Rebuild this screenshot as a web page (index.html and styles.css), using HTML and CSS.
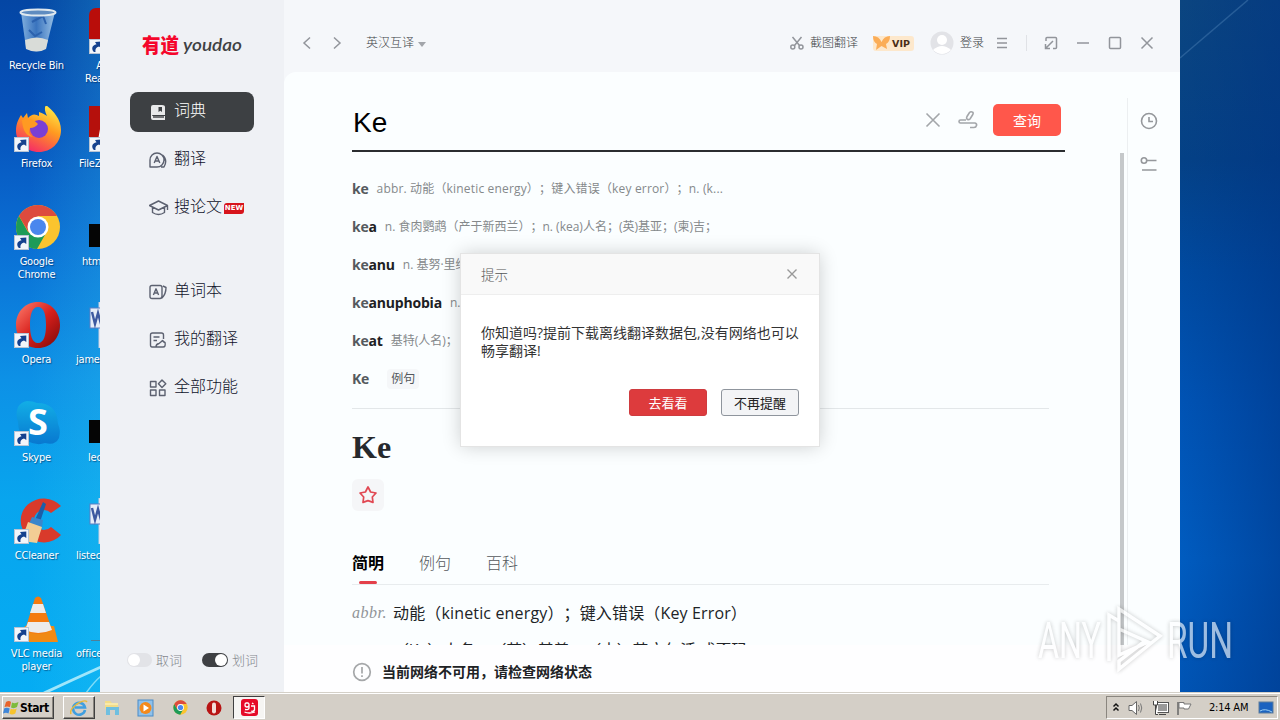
FILE: index.html
```html
<!DOCTYPE html>
<html lang="zh-CN">
<head>
<meta charset="UTF-8">
<meta name="viewport" content="width=device-width, initial-scale=1.0">
<title>有道 youdao</title>
<link rel="stylesheet" href="styles.css">
</head>
<body>

<!-- shared icon shapes -->
<svg class="defs" width="0" height="0">
    <defs>
        <linearGradient id="fox" x1="0.8" y1="0" x2="0.3" y2="1"><stop offset="0" stop-color="#fff04a"/><stop offset="0.45" stop-color="#ff9a20"/><stop offset="1" stop-color="#f5276a"/></linearGradient>
        <linearGradient id="opera" x1="0" y1="0" x2="1" y2="1"><stop offset="0" stop-color="#ff8070"/><stop offset="0.5" stop-color="#d8201c"/><stop offset="1" stop-color="#7a0808"/></linearGradient>
        <linearGradient id="skype" x1="0" y1="0" x2="0" y2="1"><stop offset="0" stop-color="#12aee6"/><stop offset="1" stop-color="#0878d0"/></linearGradient>
        <linearGradient id="bin" x1="0" y1="0" x2="1" y2="0"><stop offset="0" stop-color="#8fbbe4"/><stop offset="0.45" stop-color="#3f78c0"/><stop offset="1" stop-color="#a9cdec"/></linearGradient>
    </defs>
    <symbol id="shortcut" viewBox="0 0 15 15">
        <rect x="0.5" y="0.5" width="14" height="14" fill="#f2f5fa" stroke="#b8c4d4"/>
        <path d="M5 13 C2 10 3 6 7.5 5.2 L6 3 L12.3 2.6 L12.3 9 L10 7.4 C7 8 6 10 6.5 13 Z" fill="#15418e"/>
    </symbol>
    <symbol id="chrome" viewBox="0 0 46 46">
        <circle cx="23" cy="23" r="22" fill="#fbc42e"/>
        <path d="M4 12 A22 22 0 0 0 22 45 L31 29 L23 33 L13 28 Z" fill="#1d9b58"/>
        <path d="M4 12 L13.5 28 L23 12 H42 A22 22 0 0 0 4 12 Z" fill="#dd4b3e"/>
        <circle cx="23" cy="23" r="10.5" fill="#fff"/>
        <circle cx="23" cy="23" r="8" fill="#4a87ee"/>
    </symbol>
    <symbol id="operaIcon" viewBox="0 0 46 46">
        <path fill-rule="evenodd" fill="url(#opera)" d="M23 0 C36 0 45 10 45 23 C45 36 36 46 23 46 C10 46 1 36 1 23 C1 10 10 0 23 0 Z M23 5 C17 5 15 13 15 23 C15 33 17 41 23 41 C29 41 31 33 31 23 C31 13 29 5 23 5 Z"/>
    </symbol>
    <symbol id="word" viewBox="0 0 46 46">
        <path d="M10 0 H46 V46 H10 Z" fill="#f3f5fb" stroke="#c8cee0"/>
        <path d="M0 27 H9.5 V46 H0 Z" fill="none"/>
        <rect x="1" y="6" width="22" height="20" fill="#e6ecf8" stroke="#5a7fc4"/>
        <path d="M3 10 L6 22 L9 11 L12 22 L15 10" fill="none" stroke="#3d58a0" stroke-width="2.4"/>
    </symbol>
    <symbol id="cmd" viewBox="0 0 46 46"><rect x="0" y="20" width="46" height="23" fill="#050505"/></symbol>
</svg>

<div class="desktop">
    <svg class="wallpaper" viewBox="0 0 1280 692">
        <path d="M44 693 Q72 680 101 667" stroke="#9fe6fb" stroke-width="3"/>
        <path d="M86 693 Q94 682 101 676" stroke="#7fdcf8" stroke-width="1.5"/>
        <path d="M1180 58 L1248 0" stroke="#3c72a8" stroke-width="1.5" opacity="0.6"/>
    </svg>
    <div class="icons">
        <div class="shortcut">
            <svg class="pic" viewBox="0 0 46 46">
                <path d="M6 4 L11 40 Q21 47 31 40 L40 4 Z" fill="url(#bin)" opacity="0.9"/>
                <path d="M10 32 Q22 27 33 32 L31 41 Q22 46 11 41 Z" fill="#d9dcd8"/>
                <path d="M17 14 L28 8 L31 16 M14 22 L20 28 L27 24" fill="none" stroke="#2c62ae" stroke-width="2"/>
                <ellipse cx="23" cy="4.5" rx="17.5" ry="3" fill="#5f8cc0" stroke="#dfe8ee" stroke-width="2"/>
            </svg>
            <span class="name">Recycle Bin</span>
        </div>
        <div class="shortcut">
            <svg class="pic" viewBox="0 0 46 46">
                <path d="M24 6 C28 7 30 9 32 10 C30 6 29 2 31 -1 C37 4 46 12 46 24 C46 37 36 46 24 46 C11 46 1 36 1 25 C1 18 3 14 6 9 L8 12 L12 7 L13 12 Q18 6 24 10 Z" fill="url(#fox)"/>
                <circle cx="24" cy="23" r="9" fill="#7a3fd4"/>
                <path d="M7 14 Q16 10 23 18 Q20 22 15 22 Q12 27 18 31 Q8 30 7 14 Z" fill="#ff9a22"/>
            </svg>
            <svg class="arrow"><use href="#shortcut"/></svg>
            <span class="name">Firefox</span>
        </div>
        <div class="shortcut">
            <svg class="pic"><use href="#chrome"/></svg>
            <svg class="arrow"><use href="#shortcut"/></svg>
            <span class="name">Google<br>Chrome</span>
        </div>
        <div class="shortcut">
            <svg class="pic"><use href="#operaIcon"/></svg>
            <svg class="arrow"><use href="#shortcut"/></svg>
            <span class="name">Opera</span>
        </div>
        <div class="shortcut">
            <svg class="pic" viewBox="0 0 46 46">
                <path d="M12 1 Q18 1 22 3 Q42 3 43 24 Q46 30 44 38 Q40 46 30 43 Q22 46 12 41 Q3 34 3 22 Q0 14 3 7 Q6 2 12 1 Z" fill="url(#skype)"/>
                <text x="23" y="35" text-anchor="middle" class="skype-s">S</text>
            </svg>
            <svg class="arrow"><use href="#shortcut"/></svg>
            <span class="name">Skype</span>
        </div>
        <div class="shortcut">
            <svg class="pic" viewBox="0 0 46 46">
                <path d="M46 8 A23 22 0 1 0 46 37 L36 29 A10 10 0 1 1 36 15 Z" fill="#d93a2b"/>
                <path d="M28 4 L31 6 L25 24 L20 22 Z" fill="#1d5fa8"/>
                <path d="M17 19 L28 22 L27 29 L14 26 Z" fill="#3a86cc"/>
                <path d="M13 24 L27 29 Q24 38 22 45 L0 42 Q10 36 13 24 Z" fill="#f2cd94"/>
            </svg>
            <svg class="arrow"><use href="#shortcut"/></svg>
            <span class="name">CCleaner</span>
        </div>
        <div class="shortcut">
            <svg class="pic" viewBox="0 0 46 46">
                <path d="M10 30 H39 L43 46 H5 Z" fill="#f08a14"/>
                <path d="M20 2 Q23 -1 26 2 L37 34 Q23 42 10 34 Z" fill="#f47b10"/>
                <path d="M18 8 H28 L31 17 H15 Z M13 26 H34 L37 34 Q23 40 10 34 Z" fill="#ececec"/>
            </svg>
            <svg class="arrow"><use href="#shortcut"/></svg>
            <span class="name">VLC media<br>player</span>
        </div>
    </div>
    <div class="icons second">
        <div class="shortcut">
            <svg class="pic" viewBox="0 0 46 46"><rect width="46" height="46" rx="7" fill="#b90d0a"/></svg>
            <svg class="arrow"><use href="#shortcut"/></svg>
            <span class="name indent-3">A<br>Rea</span>
        </div>
        <div class="shortcut">
            <svg class="pic" viewBox="0 0 46 46"><rect width="46" height="46" fill="#b5100c"/><path d="M8 40 L14 6 H40 V13 H20 V40 Z" fill="#fff"/></svg>
            <svg class="arrow"><use href="#shortcut"/></svg>
            <span class="name indent-1">FileZ</span>
        </div>
        <div class="shortcut">
            <svg class="pic"><use href="#cmd"/></svg>
            <span class="name indent-2">htm</span>
        </div>
        <div class="shortcut">
            <svg class="pic"><use href="#word"/></svg>
            <span class="name">jame</span>
        </div>
        <div class="shortcut">
            <svg class="pic"><use href="#cmd"/></svg>
            <span class="name indent-4">lec</span>
        </div>
        <div class="shortcut">
            <svg class="pic"><use href="#word"/></svg>
            <span class="name">listec</span>
        </div>
        <div class="shortcut">
            <svg class="pic" viewBox="0 0 46 46"><path d="M2 44.5 H46" stroke="#4f7f98"/></svg>
            <span class="name">office</span>
        </div>
    </div>

    <!-- dictionary window -->
    <div class="window">
        <div class="sidebar">
            <svg class="logo" viewBox="0 0 110 30">
                <text x="1" y="20" textLength="37" lengthAdjust="spacingAndGlyphs" class="logo-cn">有道</text>
                <text x="42" y="18" textLength="59" lengthAdjust="spacingAndGlyphs" class="logo-en">youdao</text>
            </svg>
            <div class="menu">
                <div class="menu-item active">
                    <svg width="18" height="18" viewBox="0 0 18 18"><path d="M4 2 H13 Q16 2 16 4 V12 H4 Q3 12 3 13 H16 V17 H4 Q2 17 2 15 V4 Q2 2 4 2 Z" fill="#e8e9ea"/><path d="M9.500 4 H13 V9 L11.300 7.800 L9.500 9 Z" fill="#3d4043"/><path d="M4 14 H15" stroke="#3d4043"/></svg>
                    <span>词典</span>
                </div>
                <div class="menu-item">
                    <svg width="18" height="18" viewBox="0 0 18 18"><path d="M1 16 V9 A7 7 0 1 1 8 16 Z M13.5 4 Q19 9 15 16 H12 M5.2 12 L8 5.5 L10.8 12 M6.2 10 H9.8"/></svg>
                    <span>翻译</span>
                </div>
                <div class="menu-item">
                    <svg width="20" height="18" viewBox="0 0 20 18"><path d="M0.5 6.5 L9.5 2 L18.5 6.5 L9.5 11 Z M3.5 8.5 V13.5 Q9.5 17.5 15.5 13.5 V8.5 M18.5 7 V11"/></svg>
                    <span>搜论文</span><em>NEW</em>
                </div>
                <div class="menu-item gap">
                    <svg width="18" height="18" viewBox="0 0 18 18"><path d="M3 2.5 H11 Q13 2.5 13 4.5 V13 Q13 15.5 11 15.5 H3 Q1 15.5 1 13.5 V4.5 Q1 2.5 3 2.5 Z M14 3 L17 4.5 Q17 11 13 15 M4.4 12 L7 5.8 L9.6 12 M5.3 10 H8.7"/></svg>
                    <span>单词本</span>
                </div>
                <div class="menu-item">
                    <svg width="18" height="18" viewBox="0 0 18 18"><path d="M7 16 H3 Q1.5 16 1.5 14 V4 Q1.5 2 3.5 2 H12.5 Q14.5 2 14.5 4 V8 M4.5 6 H10.5 M4.5 9.5 H8 M7 16 Q7 13 10 12.5 Q12 11 13.5 9.5 Q14.5 11 16 11.500 Q17 16 14 16 Z"/></svg>
                    <span>我的翻译</span>
                </div>
                <div class="menu-item">
                    <svg width="18" height="18" viewBox="0 0 18 18"><path d="M1.5 2.5 H7 V8 H1.5 Z M1.5 11 H7 V16.5 H1.5 Z M10.5 11 H16 V16.5 H10.5 Z M13 1 L16.8 4.8 L13 8.6 L9.4 4.8 Z"/></svg>
                    <span>全部功能</span>
                </div>
            </div>
            <div class="switches">
                <i class="switch"></i><span>取词</span>
                <i class="switch on"></i><span>划词</span>
            </div>
        </div>

        <div class="main">
            <div class="topbar">
                <svg class="back" width="10" height="14" viewBox="0 0 10 14"><path d="M8 1.5 L2 7 L8 12.5"/></svg>
                <svg class="forward" width="10" height="14" viewBox="0 0 10 14"><path d="M2 1.5 L8 7 L2 12.5"/></svg>
                <span class="lang">英汉互译</span><i class="caret"></i>
                <svg class="cut" width="14" height="14" viewBox="0 0 14 14"><path d="M2.500 1 L9.500 9.500 M11.500 1 L4.500 9.500"/><circle cx="2.8" cy="11" r="2"/><circle cx="11" cy="11" r="2"/></svg>
                <span class="shot">截图翻译</span>
                <span class="vip"><svg width="17" height="16" viewBox="0 0 17 16"><path d="M0 1 Q6 1 8.5 7 Q11 1 17 1 Q17 7 13 9 L14 14 L8.5 11 L3 15 L4 9 Q0 7 0 1 Z"/></svg>VIP</span>
                <svg class="avatar" width="24" height="24" viewBox="0 0 24 24"><circle cx="12" cy="12" r="11.5" fill="#e2e3e7"/><circle cx="12" cy="9" r="5" fill="#fff"/><path d="M3 19 Q12 11 21 19 Q12 27 3 19 Z" fill="#fff"/></svg>
                <span class="login">登录</span>
                <svg class="more" width="10" height="12" viewBox="0 0 10 12"><path d="M0 1.5 H10 M0 6 H10 M0 10.5 H10"/></svg>
                <i class="line"></i>
                <svg class="mini" width="14" height="14" viewBox="0 0 14 14"><path d="M2 5 V2.500 Q2 1.500 3 1.500 H11.500 Q12.500 1.500 12.500 2.500 V11.500 Q12.500 12.500 11.500 12.500 H9 M9 5 L2 12 M1.5 8 V12.5 H6"/></svg>
                <svg class="win" width="14" height="14" viewBox="0 0 14 14"><path d="M1 7 H13"/></svg>
                <svg class="win" width="14" height="14" viewBox="0 0 14 14"><rect x="1.5" y="1.5" width="11" height="11" rx="1"/></svg>
                <svg class="win" width="14" height="14" viewBox="0 0 14 14"><path d="M1.5 1.5 L12.5 12.5 M12.5 1.5 L1.5 12.5"/></svg>
            </div>

            <div class="page">
                <div class="content">
                    <div class="search">
                        <span class="query">Ke</span>
                        <svg width="16" height="16" viewBox="0 0 16 16"><path d="M1.5 1.5 L14.5 14.5 M14.5 1.5 L1.5 14.5"/></svg>
                        <svg class="hand" width="20" height="20" viewBox="0 0 20 20"><path d="M9.5 9.5 Q8 8.5 9 6.5 L11.5 2.5 Q13 1 15 2.5 Q15.5 3.5 14.5 5 L12 9 Q11 10 9.5 9.5 Z M8 10 H2.5 Q1 10 1 11.5 Q1 13 2.5 13 H17 Q19 13.5 18.5 15.5 Q18 17.5 16 17.5 H12"/></svg>
                        <button class="search-btn">查询</button>
                    </div>
                    <div class="suggest">
                        <div class="row"><b><i>ke</i></b><span class="r1">abbr. 动能（kinetic energy）；键入错误（key error）；n. (k...</span></div>
                        <div class="row"><b><i>ke</i>a</b><span class="r2">n. 食肉鹦鹉（产于新西兰）；n. (kea)人名；(英)基亚；(柬)吉；</span></div>
                        <div class="row"><b><i>ke</i>anu</b><span>n. 基努·里维斯</span></div>
                        <div class="row"><b><i>ke</i>anuphobia</b><span>n.</span></div>
                        <div class="row"><b><i>ke</i>at</b><span>基特(人名)；</span></div>
                        <div class="row"><b><i>Ke</i></b><span class="tag">例句</span></div>
                    </div>
                    <div class="word">Ke</div>
                    <div class="star"><svg width="20" height="20" viewBox="0 0 20 20"><path d="M10 2 L12.6 7 L18 8 L14.3 12 L15 17.4 L10 15.6 L5 17.4 L5.7 12 L2 8 L7.4 7 Z"/></svg></div>
                    <div class="tabs">
                        <span class="tab current">简明</span>
                        <span class="tab">例句</span>
                        <span class="tab">百科</span>
                    </div>
                    <div class="meaning"><i>abbr.</i><span>动能（kinetic energy）；键入错误（Key Error）</span></div>
                    <div class="meaning cut-off"><i></i><span>（Ke）人名；（英）基善；（中）英文包活 成歪码</span></div>
                </div>
                <div class="scroll"></div>
                <div class="rail">
                    <svg width="18" height="18" viewBox="0 0 18 18"><circle cx="9" cy="9" r="7.5"/><path d="M9 5 V9.5 H13"/></svg>
                    <svg width="18" height="18" viewBox="0 0 18 18"><circle cx="4" cy="4.5" r="2.7"/><path d="M7 4.5 H16.5 M2 14 H16.5"/></svg>
                </div>
            </div>
            <div class="notice">
                <svg width="20" height="20" viewBox="0 0 20 20"><circle cx="10" cy="10" r="8.3"/><path d="M10 5 V11.5 M10 13.2 V15"/></svg>
                <span>当前网络不可用，请检查网络状态</span>
            </div>
        </div>
    </div>

    <div class="dialog">
        <div class="dialog-head">
            <span>提示</span>
            <svg width="12" height="12" viewBox="0 0 12 12"><path d="M1.500 1.500 L10.500 10.500 M10.500 1.500 L1.500 10.500"/></svg>
        </div>
        <p>你知道吗?提前下载离线翻译数据包,没有网络也可以<br>畅享翻译!</p>
        <div class="dialog-btns">
            <button class="primary">去看看</button>
            <button>不再提醒</button>
        </div>
    </div>

    <svg class="watermark" viewBox="0 0 210 72">
        <text x="3" y="53" textLength="63" lengthAdjust="spacingAndGlyphs">ANY</text>
        <path d="M74 56 V10 L84 16 M84 24 V4 L125 31 L84 64 V56 L110 36 M84 24 L113 37 L84 50 V24"/>
        <text x="132" y="53" textLength="66" lengthAdjust="spacingAndGlyphs">RUN</text>
    </svg>
</div>

<div class="taskbar">
    <div class="start">
        <svg width="17" height="16" viewBox="0 0 17 16"><path d="M3 2 Q6 0 8 2 L7 7 Q4 6 1.500 7 Z" fill="#e8632a"/><path d="M9 2.500 Q12 4 15.500 2 L14 7 Q11 9 8 7.500 Z" fill="#7dbb3c"/><path d="M1.300 8.200 Q4 7 6.700 8.500 L5.500 13.500 Q3 12 0 13.500 Z" fill="#3f86d8"/><path d="M7.700 8.800 Q11 10 13.700 8.400 L12.300 13.500 Q9 15.500 6.500 13.800 Z" fill="#f6c32c"/></svg>
        <span>Start</span>
    </div>
    <div class="task raised">
        <svg width="18" height="18" viewBox="0 0 18 18"><path d="M15 11 A6 6 0 1 1 15 8.500 H5" fill="none" stroke="#3f9fe0" stroke-width="2.600"/><path d="M1 15 Q-1 11 7 5 Q15 0 17 3" fill="none" stroke="#e8b93a" stroke-width="1.500"/></svg>
    </div>
    <div class="task">
        <svg width="18" height="18" viewBox="0 0 18 18"><path d="M2 2 H7 L9 4 H15 V10 H2 Z" fill="#f2dc88"/><path d="M3 8 H16 V16 H12 V11 H7 V16 H3 Z" fill="#6fbfe0"/><path d="M2 5 H15" stroke="#fff6cc"/></svg>
    </div>
    <div class="task">
        <svg width="18" height="18" viewBox="0 0 18 18"><rect x="1" y="1" width="15" height="16" fill="#8fc1ea" stroke="#4a8cc8"/><circle cx="8.500" cy="9" r="6" fill="#f48a1c"/><path d="M6.500 5.500 L12 9 L6.500 12.500 Z" fill="#fff"/></svg>
    </div>
    <div class="task"><svg width="15" height="15"><use href="#chrome"/></svg></div>
    <div class="task"><svg width="16" height="16" viewBox="0 0 16 16"><circle cx="8" cy="8" r="7.500" fill="#b81414"/><rect x="6" y="2.500" width="4" height="11" rx="2" fill="#f3dcd8"/></svg></div>
    <div class="task pressed">
        <svg width="17" height="17" viewBox="0 0 17 17"><rect width="17" height="17" rx="3" fill="#e60a28"/><path d="M5 4 H7 Q8 4 8 6 Q8 8 6 8 Q4 8 4 6 Q4 4 5 4 M8 5 V9 Q8 11 4 10.500 M11 4 L12.500 5 M10 7 H13.500 V11 Q12 13 10 12 M3.500 13 Q8 15 14 13" fill="none" stroke="#fff" stroke-width="1.300"/></svg>
    </div>
    <div class="tray">
        <svg width="10" height="14" viewBox="0 0 10 14"><path d="M2.500 5.500 L5 3 L7.500 5.500 M2.500 9.500 L5 7 L7.500 9.500" stroke="#111" stroke-width="1.500" fill="none"/></svg>
        <svg class="g1" width="17" height="16" viewBox="0 0 17 16"><path d="M1 5.500 H4 L8.500 1.500 V14.500 L4 10.500 H1 Z" fill="#fff" stroke="#666"/><path d="M10.500 5 Q12 8 10.500 11 M12.500 3.500 Q15 8 12.500 12.500" fill="none" stroke="#777"/></svg>
        <svg class="g2" width="17" height="16" viewBox="0 0 17 16"><rect x="5.500" y="3.500" width="10" height="8" fill="#999" stroke="#fff"/><rect x="4.500" y="2.500" width="12" height="10" fill="none" stroke="#555"/><path d="M7 14.500 H14" stroke="#444"/><path d="M1.500 1 V5 H5.500 V1 M3.500 5 V14.500 H6" fill="#fff" stroke="#444"/></svg>
        <svg class="g2" width="17" height="16" viewBox="0 0 17 16"><path d="M2 2 V15" stroke="#666" stroke-width="1.500"/><path d="M3 2.500 H8 V4 H15 L12.500 9 H8 V8 H3 Z" fill="#fff" stroke="#777"/></svg>
        <span>2:14 AM</span>
        <svg width="16" height="14" viewBox="0 0 16 14"><rect x="1" y="1" width="14" height="11" fill="#1b62c0" stroke="#5d7d9c"/><path d="M2 10 Q7 7 14 11" stroke="#9cd0f4" fill="none"/></svg>
    </div>
</div>

</body>
</html>
```
FILE: styles.css
```css
body {
    margin: 0;
    width: 1280px;
    height: 720px;
    overflow: hidden;
    display: flex;
    flex-direction: column;
    font-family: "Open Sans", "Noto Sans CJK SC", sans-serif;
    text-spacing-trim: space-all;
}

svg {
    display: block;
    flex: none;
}

.defs {
    position: absolute;
}

/* desktop */
.desktop {
    position: relative;
    height: 692px;
    overflow: hidden;
    display: flex;
    background:
        linear-gradient(90deg, rgba(60, 210, 240, 0) 30px, rgba(60, 210, 240, 0.2) 100px, transparent 101px),
        linear-gradient(180deg, #0446a4 0, #0650b8 110px, #0a6ed4 240px, #0d91e6 380px, #08a5ee 500px, #05acf3 692px);
}

/* right part of the wallpaper is darker */
.desktop::after {
    content: "";
    width: 100px;
    margin-left: auto;
    background:
        linear-gradient(90deg, rgba(0, 50, 130, 0), rgba(0, 50, 130, 0.5)),
        linear-gradient(180deg, #0b4580 0, #044186 160px, #004aa0 270px, #0053b4 400px, #005cc0 560px, #0054b4 692px);
}

.wallpaper {
    position: absolute;
    left: 0;
    top: 0;
    width: 1280px;
    height: 692px;
    fill: none;
    z-index: 1;
}

.icons {
    width: 75px;
    margin-left: -1px;
}

.icons.second {
    margin-left: 0;
}

.shortcut {
    position: relative;
    height: 90px;
    padding-top: 8px;
    display: flex;
    flex-direction: column;
    align-items: center;
}

.pic {
    width: 46px;
    height: 46px;
    margin-left: 2px;
}

.second .pic {
    margin-left: 0;
}

.arrow {
    position: absolute;
    left: 15px;
    top: 39px;
    width: 15px;
    height: 15px;
}

.name {
    margin-top: 5px;
    color: #fff;
    font: 11px/13px "DejaVu Sans Condensed", "DejaVu Sans", sans-serif;
    font-stretch: condensed;
    letter-spacing: -0.2px;
    text-align: center;
    white-space: nowrap;
    text-shadow: 1px 1px 1px rgba(0, 20, 60, 0.5);
}

.second .name {
    align-self: flex-start;
    padding-left: 2px;
    text-align: right;
}

.second .indent-1 { padding-left: 5px; }
.second .indent-2 { padding-left: 8px; }
.second .indent-3 { padding-left: 11px; }
.second .indent-4 { padding-left: 14px; }

.skype-s {
    font: bold 36px "Open Sans", sans-serif;
    fill: #fff;
}

/* app window */
.window {
    position: absolute;
    left: 100px;
    top: 0;
    width: 1080px;
    height: 692px;
    display: flex;
    background: #f5f7fa;
    z-index: 2;
}

.sidebar {
    width: 184px;
    display: flex;
    flex-direction: column;
    background: #eff1f5;
}

.logo {
    width: 110px;
    height: 30px;
    margin: 33px 0 29px 41px;
}

.logo-cn {
    font: 900 20px/20px "Noto Sans CJK SC", sans-serif;
    fill: #f5062b;
}

.logo-en {
    font: italic 600 18px/20px Lato, sans-serif;
    fill: #3e4144;
}

.menu {
    width: 124px;
    margin-left: 30px;
}

.menu-item {
    height: 40px;
    margin-bottom: 8px;
    padding-left: 19px;
    box-sizing: border-box;
    display: flex;
    align-items: center;
    border-radius: 8px;
    color: #10112a;
    font-size: 16px;
    font-weight: 300;
    line-height: 20px;
    white-space: nowrap;
}

.menu-item svg {
    margin-right: 7px;
    fill: none;
    stroke: #5c6170;
    stroke-width: 1.4;
    stroke-linejoin: round;
}

.menu-item svg[width="20"] {
    margin-right: 5px;
}

.menu-item span {
    margin-top: -4px;
}

.menu-item.active {
    background: #3d4043;
    color: #fff;
}

.menu-item.active svg {
    stroke: none;
}

.menu-item.gap {
    margin-top: 44px;
}

.menu-item em {
    width: 20px;
    height: 11px;
    margin-left: 2px;
    border-radius: 3px 0 3px 0;
    background: #d7141c;
    color: #fff;
    font: bold 7px/11px "DejaVu Sans", sans-serif;
    text-align: center;
}

.switches {
    margin: auto 0 22px 27px;
    display: flex;
    align-items: center;
    color: #84878d;
    font-size: 13px;
    font-weight: 300;
    line-height: 20px;
}

.switches span {
    width: 46px;
    margin-left: 4px;
}

.switch {
    width: 25px;
    height: 14px;
    border-radius: 7px;
    background: #e2e3e7;
    display: flex;
    align-items: center;
}

.switch::before {
    content: "";
    width: 12px;
    height: 12px;
    margin: 0 1px;
    border-radius: 50%;
    background: #fff;
}

.switch.on {
    width: 26px;
    background: #3e4043;
    justify-content: flex-end;
}

.main {
    width: 896px;
    display: flex;
    flex-direction: column;
}

.topbar {
    height: 72px;
    padding: 14px 26px 0 18px;
    box-sizing: border-box;
    display: flex;
    align-items: center;
    color: #3c3f45;
    font-size: 12px;
    font-weight: 300;
    line-height: 18px;
    white-space: nowrap;
}

.topbar svg {
    fill: none;
    stroke: #92959b;
    stroke-width: 1.5;
}

.topbar .forward {
    margin-left: 20px;
}

.lang {
    margin-left: 24px;
}

.caret {
    margin: 2px 364px 0 4px;
    border: 4px solid transparent;
    border-top: 5px solid #a2a5aa;
    border-bottom: 0;
}

.shot {
    margin-left: 6px;
}

.vip {
    width: 41px;
    height: 15px;
    margin-left: 15px;
    display: flex;
    align-items: center;
    border-radius: 3px;
    background: #fde8cc;
    color: #4a2d16;
    font: bold 9.5px "DejaVu Sans", sans-serif;
}

.topbar .vip svg {
    margin-right: 2px;
    fill: #fbad57;
    stroke: none;
}

.topbar .avatar {
    margin-left: 16px;
    stroke: none;
}

.login {
    margin-left: 6px;
}

.topbar .more {
    margin-left: 13px;
}

.line {
    width: 1px;
    height: 16px;
    margin: 0 17px 0 19px;
    background: #e0e2e6;
}

.topbar .win {
    margin-left: 18px;
}

.page {
    height: 573px;
    display: flex;
    overflow: hidden;
    border-radius: 12px 0 0 0;
    background: #fbfeff;
}

.content {
    width: 697px;
    padding-left: 68px;
}

.search {
    width: 713px;
    height: 80px;
    padding: 18px 4px 0 1px;
    box-sizing: border-box;
    display: flex;
    align-items: center;
    border-bottom: 2px solid #2b2d30;
}

.query {
    flex: 1;
    margin-top: 5px;
    color: #000;
    font: 28px "Liberation Sans", Arial, sans-serif;
}

.search svg {
    fill: none;
    stroke: #a3a6aa;
    stroke-width: 1.6;
}

.search .hand {
    margin: 0 15px 0 17px;
}

.search-btn {
    width: 68px;
    height: 32px;
    padding: 0;
    border: 0;
    border-radius: 5px;
    background: #ff574b;
    color: #fff;
    font: 14px "Noto Sans CJK SC", sans-serif;
}

.suggest {
    height: 238px;
    padding-top: 18px;
    border-bottom: 1px solid #e3e7e9;
}

.row {
    height: 38px;
    display: flex;
    align-items: center;
    font-size: 14px;
    line-height: 20px;
    white-space: nowrap;
}

.row b {
    color: #1d2023;
    font-weight: 700;
    letter-spacing: -0.2px;
}

.row i {
    color: #555a5e;
    font-style: normal;
}

.row span {
    margin-left: 8px;
    color: #85898b;
    font-family: "Open Sans", "Noto Sans CJK TC", sans-serif;
    font-size: 12px;
    font-weight: 400;
}

.row .r1 {
    letter-spacing: 0.17px;
}

.row .tag {
    margin-left: 18px;
    padding: 0 4px;
    border-radius: 4px;
    background: #f5f7f9;
    color: #54585c;
}

.word {
    margin-top: 20px;
    height: 38px;
    color: #26292d;
    font: bold 32px/36px "Liberation Serif", serif;
}

.star {
    width: 32px;
    height: 32px;
    margin-top: 12px;
    display: flex;
    align-items: center;
    justify-content: center;
    border-radius: 6px;
    background: #f5f6f8;
}

.star svg {
    fill: none;
    stroke: #e14853;
    stroke-width: 1.7;
    stroke-linejoin: round;
}

.tabs {
    height: 41px;
    margin-top: 32px;
    display: flex;
    gap: 35px;
    border-bottom: 1px solid #e8ecee;
}

.tab {
    width: 32px;
    height: 41px;
    color: #55595d;
    font-size: 16px;
    font-weight: 300;
    line-height: 41px;
}

.tab.current {
    position: relative;
    color: #000;
    font-weight: 700;
}

.current::after {
    content: "";
    position: absolute;
    left: 7px;
    bottom: 0;
    width: 18px;
    height: 3px;
    border-radius: 2px;
    background: #e4404a;
}

.meaning {
    margin-top: 16px;
    height: 24px;
    display: flex;
    color: #202326;
    font-family: "Open Sans", "Noto Sans CJK TC", sans-serif;
    font-size: 16px;
    line-height: 24px;
    letter-spacing: 0.15px;
    white-space: nowrap;
}

.meaning i {
    width: 41px;
    color: #909498;
    font: italic 16px/23px "Liberation Serif", serif;
    letter-spacing: 0.5px;
}

.meaning.cut-off {
    margin-top: 13px;
    letter-spacing: -0.2px;
}

.scroll {
    width: 4px;
    height: 492px;
    margin: 81px 3px 0 71px;
    background: #c5c8ca;
}

.rail {
    width: 52px;
    margin-top: 26px;
    padding: 14px 0 0 12px;
    box-sizing: border-box;
    border-left: 1px solid #eceff1;
}

.rail svg {
    margin-bottom: 26px;
    fill: none;
    stroke: #95989c;
    stroke-width: 1.6;
}

.notice {
    height: 47px;
    padding: 6px 0 0 68px;
    box-sizing: border-box;
    display: flex;
    align-items: center;
    background: #fefeff;
    color: #202224;
    font: bold 14px/20px "Noto Sans CJK TC", sans-serif;
}

.notice span {
    margin-top: -2px;
}

.notice svg {
    margin-right: 10px;
    fill: none;
    stroke: #a5a7a9;
    stroke-width: 1.7;
}

/* dialog over everything */
.dialog {
    position: absolute;
    left: 461px;
    top: 254px;
    width: 358px;
    height: 192px;
    background: #fff;
    box-shadow: 0 0 0 1px #e4e4e4, 0 0 18px rgba(0, 0, 0, 0.2);
    z-index: 3;
}

.dialog-head {
    height: 40px;
    padding: 0 21px 0 20px;
    display: flex;
    align-items: center;
    justify-content: space-between;
    border-bottom: 1px solid #eee;
    background: #f9f9f9;
    color: #555;
    font-size: 13.5px;
    font-weight: 300;
}

.dialog-head svg {
    fill: none;
    stroke: #999;
    stroke-width: 1.4;
}

.dialog p {
    margin: 29px 0 0 20px;
    color: #333;
    font-size: 14px;
    line-height: 18px;
    white-space: nowrap;
}

.dialog-btns {
    margin: 29px 20px 0 0;
    display: flex;
    justify-content: flex-end;
    gap: 14px;
}

.dialog-btns button {
    width: 78px;
    height: 27px;
    padding: 0;
    border: 1px solid #8f959d;
    border-radius: 3px;
    background: #f3f4f6;
    color: #222;
    font: 13px "Noto Sans CJK SC", sans-serif;
}

.dialog-btns .primary {
    border-color: #cf3b3f;
    background: #dd3b3d;
    color: #fff;
}

.watermark {
    position: absolute;
    left: 1035px;
    top: 605px;
    width: 210px;
    height: 72px;
    filter: drop-shadow(0 0 2px rgba(0, 0, 0, 0.35));
    opacity: 0.62;
    z-index: 4;
}

.watermark text {
    font: 50px/50px Roboto, sans-serif;
    fill: #fff;
}

.watermark path {
    fill: none;
    stroke: #fff;
    stroke-width: 3.5;
}

/* taskbar */
.taskbar {
    height: 28px;
    padding: 3px 2px 1px;
    box-sizing: border-box;
    display: flex;
    border-top: 1px solid #d4d0c8;
    box-shadow: inset 0 1px #fff;
    background: #d4cfc7;
}

.start,
.raised {
    border: 1px solid;
    border-color: #fff #404040 #404040 #fff;
    box-shadow: inset -1px -1px #8a867f;
}

.start {
    width: 50px;
    display: flex;
    align-items: center;
    color: #000;
    font: bold 12px "DejaVu Sans Condensed", "DejaVu Sans", sans-serif;
    letter-spacing: -0.4px;
}

.task {
    width: 34px;
    box-sizing: border-box;
    display: flex;
    align-items: center;
    justify-content: center;
}

.raised {
    width: 32px;
    margin-left: 9px;
}

.pressed {
    width: 32px;
    margin-left: 2px;
    border: 1px solid;
    border-color: #404040 #fff #fff #404040;
    background: #f6f5f3;
}

.tray {
    width: 172px;
    margin-left: auto;
    padding-left: 4px;
    box-sizing: border-box;
    display: flex;
    align-items: center;
    border: 1px solid;
    border-color: #8a867f #fff #fff #8a867f;
    color: #000;
    font: 11px "DejaVu Sans Condensed", "DejaVu Sans", sans-serif;
}

.tray .g1 {
    margin-left: 7px;
}

.tray .g2 {
    margin-left: 7px;
}

.tray span {
    margin: 0 10px 0 16px;
    letter-spacing: -0.2px;
    white-space: nowrap;
}
```
